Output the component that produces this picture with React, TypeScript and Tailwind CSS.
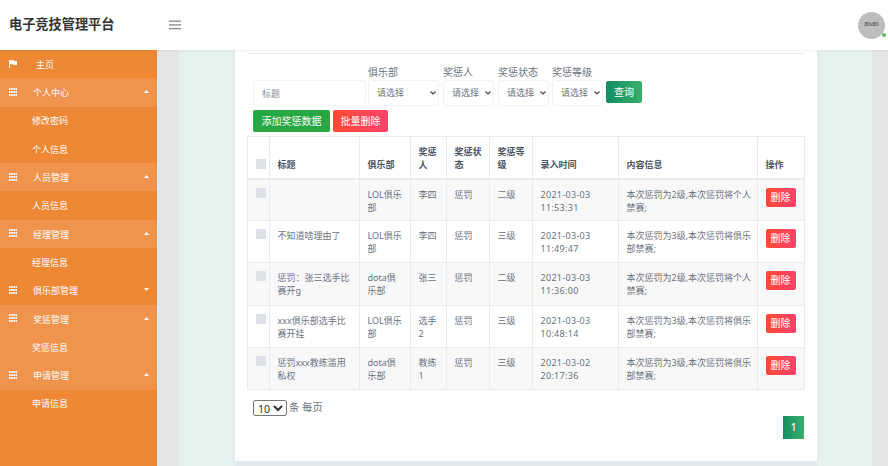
import React from "react";

const Grid = () => (
  <svg width="8" height="8" viewBox="0 0 8 8" className="shrink-0" fill="#fff">
    {[0, 3, 6].map((y) => [0, 2.17, 4.34, 6.5].map((x) => <rect key={`${x}-${y}`} x={x} y={y} width="1.5" height="2" />))}
  </svg>
);
const Flag = () => (
  <svg width="8" height="8" viewBox="0 0 8 8" className="shrink-0" fill="#fff">
    <path d="M0 0h.9v8H0zM.9.3h3.9l.4.8H8v4H4.6l-.4-.8H.9z" />
  </svg>
);
const Caret = ({ up }: { up?: boolean }) => (
  <svg width="5" height="3" viewBox="0 0 5 3" fill="#fff" className="absolute left-[144px] top-[12px]">
    <path d={up ? "M0 3 2.5 0 5 3z" : "M0 0h5L2.5 3z"} />
  </svg>
);

function Group({ label, open, active }: { label: string; open: boolean; active: boolean }) {
  return (
    <div className={`relative flex h-[28.3px] items-center pl-[9px] text-[9px] text-white ${active ? "bg-[#f0934d]" : ""}`}>
      <span className="-mt-[1px]"><Grid /></span>
      <span className="ml-[16px] mt-[1px]">{label}</span>
      <Caret up={open} />
    </div>
  );
}
const Sub = ({ label, active }: { label: string; active?: boolean }) => (
  <div className={`flex h-[28.3px] items-center pl-[32px] text-[9px] text-white ${active ? "bg-[#f0934d]" : ""}`}>
    <span className="mt-[1px]">{label}</span>
  </div>
);

const rows = [
  ["", "LOL俱乐部", "李四", "惩罚", "二级", "2021-03-03 11:53:31", "本次惩罚为2级,本次惩罚将个人禁赛;"],
  ["不知道啥理由了", "LOL俱乐部", "李四", "惩罚", "三级", "2021-03-03 11:49:47", "本次惩罚为3级,本次惩罚将俱乐部禁赛;"],
  ["惩罚：张三选手比赛开g", "dota俱乐部", "张三", "惩罚", "二级", "2021-03-03 11:36:00", "本次惩罚为2级,本次惩罚将个人禁赛;"],
  ["xxx俱乐部选手比赛开挂", "LOL俱乐部", "选手2", "惩罚", "三级", "2021-03-03 10:48:14", "本次惩罚为3级,本次惩罚将俱乐部禁赛;"],
  ["惩罚xxx教练滥用私权", "dota俱乐部", "教练1", "惩罚", "三级", "2021-03-02 20:17:36", "本次惩罚为3级,本次惩罚将俱乐部禁赛;"],
];

const Box = () => <div className="h-[10px] w-[10px] rounded-[1px] bg-[#dee2e6]" />;
const Filter = ({ label, w }: { label: string; w: string }) => (
  <div className={`flex flex-col ${w}`}>
    <span className="h-[15px] text-[10px] leading-[15px] text-[#6b7280]">{label}</span>
    <div className="relative">
      <select className="block h-[26px] w-full appearance-none rounded-[3px] border border-[#eef5f3] bg-white pl-[8px] text-[9px] text-[#6b7280] outline-none">
        <option>请选择</option>
      </select>
      <svg width="6" height="4" viewBox="0 0 6 4" fill="none" stroke="#444" strokeWidth="1.2" className="pointer-events-none absolute right-[3px] top-[11px]">
        <path d="M.5.5 3 3 5.500.5" />
      </svg>
    </div>
  </div>
);

const th = "border border-[#e9ecef] border-b-2 pl-[7.5px] pr-[6px] pb-[7px] align-bottom text-left font-bold text-[9px] leading-[13px] text-[#4b5563]";
const td = "border border-[#e9ecef] pl-[7.5px] pr-[8px] pt-[8px] align-top text-[9px] leading-[13px] text-[#6b7280]";
const tdWide = "border border-[#e9ecef] pl-[7.5px] pr-[3px] pt-[8px] align-top text-[9px] leading-[13px] text-[#6b7280]";
const tdLol = "border border-[#e9ecef] pl-[7.5px] pr-[5px] pt-[8px] align-top text-[9px] leading-[13px] text-[#667380]";
const tdDota = "border border-[#e9ecef] pl-[7.5px] pr-[12px] pt-[8px] align-top text-[9px] leading-[13px] text-[#667380]";
const tdDate = "border border-[#e9ecef] pl-[7.5px] pr-[3px] pt-[8px] align-top text-[9px] leading-[13px] tracking-[0.3px] text-[#667380]";

export default function App() {
  return (
    <div className="flex h-[466px] w-[888px] flex-col overflow-hidden bg-[#e5e5e5]" style={{ fontFamily: '"Noto Sans", "Noto Sans CJK SC", sans-serif' }}>
      <header className="z-10 flex h-[50px] shrink-0 items-center bg-white pl-[9px] shadow-[0_1px_3px_rgba(0,0,0,0.06)]">
        <span className="w-[160px] text-[13.2px] font-bold text-[#333]">电子竞技管理平台</span>
        <svg width="12" height="10" viewBox="0 0 12 10" fill="#8f8f8f">
          <rect y="0.5" width="12" height="1.4" />
          <rect y="4.2" width="12" height="1.4" />
          <rect y="7.9" width="12" height="1.4" />
        </svg>
        <div className="relative ml-auto mr-[3px] flex h-[27px] w-[27px] items-center justify-center rounded-full bg-[#bdbdbd] text-[5px] text-[#333]">
          80x80
          <span className="absolute bottom-[2px] right-[-1px] h-[4px] w-[4px] rounded-full bg-[#5cb85c]" />
        </div>
      </header>
      <div className="flex min-h-0 flex-1">
        <aside className="w-[157px] shrink-0 bg-[#ee8835]">
          <div className="flex h-[28.3px] items-center pl-[9px] text-[9px] text-white">
            <span className="-mt-[1px]"><Flag /></span>
            <span className="ml-[19px] mt-[1px]">主页</span>
          </div>
          <Group label="个人中心" open active />
          <Sub label="修改密码" />
          <Sub label="个人信息" />
          <Group label="人员管理" open active />
          <Sub label="人员信息" />
          <Group label="经理管理" open active />
          <Sub label="经理信息" />
          <Group label="俱乐部管理" open={false} active={false} />
          <Group label="奖惩管理" open active />
          <Sub label="奖惩信息" active />
          <Group label="申请管理" open active />
          <Sub label="申请信息" />
        </aside>
        <div className="w-[22px] shrink-0 bg-[#e5e5e5]" />
        <main className="flex min-w-0 flex-1 bg-[#e5f2ec] pl-[56px] pr-[55px]">
          <div className="flex h-[411px] w-[582px] shrink-0 flex-col bg-white px-[12px] shadow-[0_5px_0_#e2eaee,-2px_0_2px_#e2eaee,2px_0_2px_#e2eaee]">
            <div className="mt-[3px] h-px bg-[#eeeeee]" />
            <div className="ml-[6px] mt-[11px] flex items-end">
              <input readOnly placeholder="标题" className="h-[26px] w-[113px] rounded-[3px] border border-[#eef5f3] pl-[8px] text-[9px] outline-none placeholder:text-[#8a8f96]" />
              <Filter label="俱乐部" w="w-[71px] ml-[2px]" />
              <Filter label="奖惩人" w="w-[51px] ml-[4px]" />
              <Filter label="奖惩状态" w="w-[51px] ml-[4px]" />
              <Filter label="奖惩等级" w="w-[51px] ml-[3px]" />
              <button className="mb-[3px] ml-[3px] h-[22px] w-[36px] rounded-[2px] bg-gradient-to-r from-[#0f8f63] to-[#38b06c] text-[10px] text-white">查询</button>
            </div>
            <div className="ml-[6px] mt-[4px] flex gap-[3px]">
              <button className="h-[22px] w-[77px] rounded-[2px] bg-[#28a745] text-[10px] text-white">添加奖惩数据</button>
              <button className="h-[22px] w-[55px] rounded-[2px] bg-gradient-to-r from-[#ff4b2b] to-[#ff416c] text-[10px] text-white">批量删除</button>
            </div>
            <table className="mt-[4px] w-[557px] table-fixed border-collapse">
              <colgroup>
                <col className="w-[22px]" />
                <col className="w-[90px]" />
                <col className="w-[51px]" />
                <col className="w-[36px]" />
                <col className="w-[43px]" />
                <col className="w-[43px]" />
                <col className="w-[86px]" />
                <col className="w-[139px]" />
                <col className="w-[47px]" />
              </colgroup>
              <thead>
                <tr className="h-[42px]">
                  <th className={`${th} pb-[9px]`}><Box /></th>
                  <th className={th}>标题</th>
                  <th className={th}>俱乐部</th>
                  <th className={th}>奖惩人</th>
                  <th className={th}>奖惩状态</th>
                  <th className={th}>奖惩等级</th>
                  <th className={th}>录入时间</th>
                  <th className={th}>内容信息</th>
                  <th className={th}>操作</th>
                </tr>
              </thead>
              <tbody>
                {rows.map((r, i) => (
                  <tr key={i} className={`h-[42.2px] ${i % 2 === 0 ? "bg-[#f8f8f9]" : ""}`}>
                    <td className={td}><Box /></td>
                    <td className={td}>{r[0]}</td>
                    <td className={r[1].startsWith("dota") ? tdDota : tdLol}>{r[1]}</td>
                    <td className={td}>{r[2]}</td>
                    <td className={td}>{r[3]}</td>
                    <td className={td}>{r[4]}</td>
                    <td className={tdDate}>{r[5]}</td>
                    <td className={tdWide}>{r[6]}</td>
                    <td className={td}>
                      <button className="h-[19px] w-[30px] rounded-[2px] bg-gradient-to-r from-[#ff4b2b] to-[#ff416c] text-[10px] text-white">删除</button>
                    </td>
                  </tr>
                ))}
              </tbody>
            </table>
            <div className="ml-[6px] mt-[10px] flex items-center text-[10.4px] text-[#6b7280]">
              <select className="h-[16px] w-[34px] rounded-[2px] border border-[#767676] bg-white text-[10.6px] text-[#333]">
                <option>10</option>
              </select>
              <span className="ml-[2px]">条 每页</span>
            </div>
            <div className="flex justify-end pr-[1px]">
              <span className="flex h-[23px] w-[21px] items-center justify-center bg-gradient-to-r from-[#0f8f63] to-[#38b06c] text-[10px] font-medium text-white">1</span>
            </div>
          </div>
        </main>
        <div className="w-[16px] shrink-0 bg-[#e5e5e5]" />
      </div>
    </div>
  );
}
